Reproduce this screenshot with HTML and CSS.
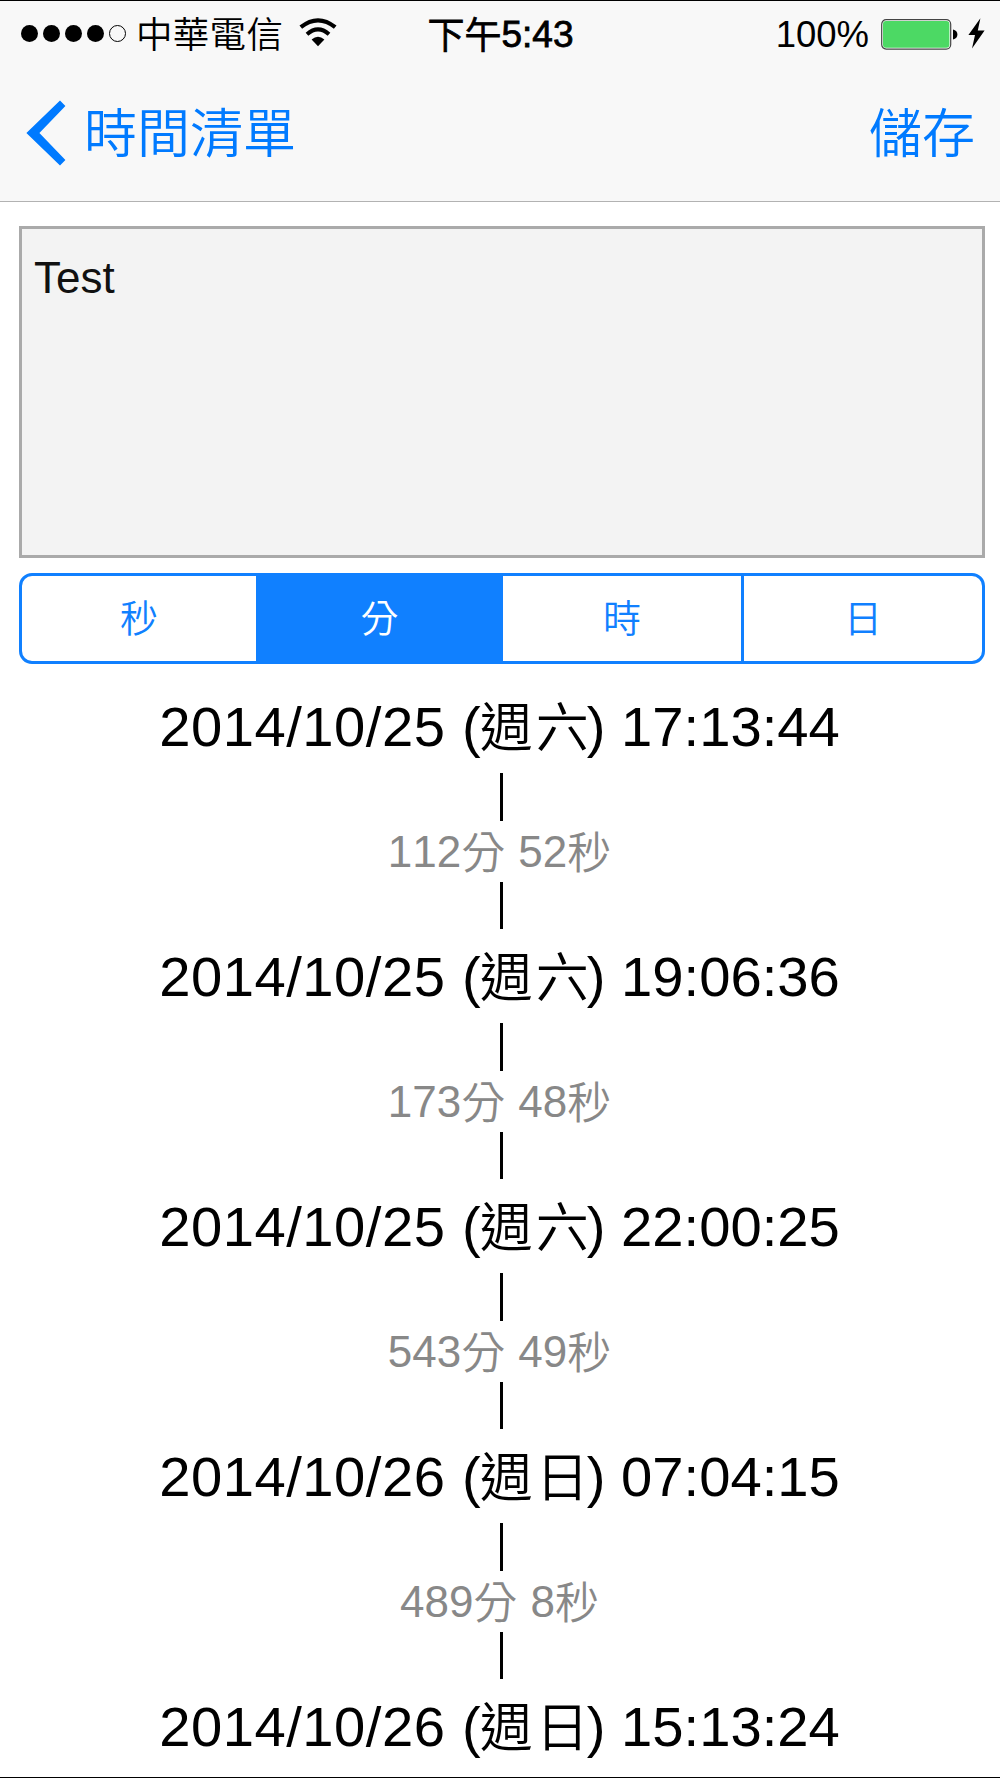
FILE: index.html
```html
<!DOCTYPE html>
<html lang="zh-Hant">
<head>
    <meta charset="UTF-8">
    <meta name="viewport" content="width=device-width, initial-scale=1.0">
    <title>時間清單</title>
    <link rel="stylesheet" href="styles.css">
</head>
<body>

<div class="screen">
    <header class="header">
        <div class="status-bar">
            <div class="status-left">
                <div class="signal">
                    <span class="dot"></span>
                    <span class="dot"></span>
                    <span class="dot"></span>
                    <span class="dot"></span>
                    <span class="dot empty"></span>
                </div>
                <span class="carrier">中華電信</span>
                <svg class="wifi" width="38" height="29" viewBox="0 0 38 29">
                    <path d="M1.8 9.2 Q19 -4.6 36.2 9.2" fill="none" stroke="#000" stroke-width="4.2"/>
                    <path d="M8 16.2 Q19 6.6 30 16.2" fill="none" stroke="#000" stroke-width="4"/>
                    <path d="M12.6 21.4 Q19 16.2 25.4 21.4 L19 28.2 Z" fill="#000"/>
                </svg>
            </div>
            <div class="status-time"><span class="zh">下午</span>5:43</div>
            <div class="status-right">
                <span class="percent">100%</span>
                <svg class="battery" width="77" height="31" viewBox="0 0 77 31">
                    <rect x="0.7" y="0.7" width="69" height="29.4" rx="4.5" fill="#fff" stroke="#444" stroke-width="1.2"/>
                    <rect x="2" y="2" width="66.4" height="26.8" rx="3" fill="#4cd964"/>
                    <path d="M72 10.5 Q76.4 11.5 76.4 15.5 Q76.4 19.5 72 20.5 Z" fill="#000"/>
                </svg>
                <svg class="bolt" width="17" height="31" viewBox="0 0 17 31">
                    <path d="M12.4 0.3 L0.4 17 H7 L4 30.6 L16.6 12.6 H9.8 Z" fill="#000"/>
                </svg>
            </div>
        </div>
        <nav class="nav-bar">
            <a class="back">
                <svg width="40" height="66" viewBox="0 0 40 66">
                    <path d="M34 0.6 L39.4 6 L13.4 33 L39.4 60 L34 65.4 L0.4 33 Z" fill="#007aff"/>
                </svg>
                <span class="nav-text">時間清單</span>
            </a>
            <a class="save nav-text">儲存</a>
        </nav>
    </header>

    <main class="content">
        <div class="note">Test</div>

        <div class="segments">
            <div class="segment">秒</div>
            <div class="segment active">分</div>
            <div class="segment">時</div>
            <div class="segment">日</div>
        </div>

        <div class="timeline">
            <div class="date"><span class="day">2014/10/25</span> (<span class="zh">週六</span>) 17:13:44</div>
            <div class="gap"><span>112<span class="zh">分</span> 52<span class="zh">秒</span></span></div>
            <div class="date"><span class="day">2014/10/25</span> (<span class="zh">週六</span>) 19:06:36</div>
            <div class="gap"><span>173<span class="zh">分</span> 48<span class="zh">秒</span></span></div>
            <div class="date"><span class="day">2014/10/25</span> (<span class="zh">週六</span>) 22:00:25</div>
            <div class="gap"><span>543<span class="zh">分</span> 49<span class="zh">秒</span></span></div>
            <div class="date"><span class="day">2014/10/26</span> (<span class="zh">週日</span>) 07:04:15</div>
            <div class="gap"><span>489<span class="zh">分</span> 8<span class="zh">秒</span></span></div>
            <div class="date"><span class="day">2014/10/26</span> (<span class="zh">週日</span>) 15:13:24</div>
        </div>
    </main>
</div>

</body>
</html>
```
FILE: styles.css
```css
* {
    box-sizing: border-box;
}

body {
    margin: 0;
    font-family: "Liberation Sans", "Noto Sans CJK TC", sans-serif;
    font-weight: 350;
    background-color: #fff;
    color: #000;
}

.screen {
    width: 1000px;
    height: 1778px;
    overflow: hidden;
    border-top: 1px solid #000;
    border-bottom: 1px solid #000;
}

.header {
    height: 201px;
    background-color: #f8f8f8;
    border-bottom: 1px solid #b2b2b2;
}

.zh {
    line-height: 1;
    vertical-align: -2px;
}

.status-bar {
    display: grid;
    grid-template-columns: 1fr auto 1fr;
    align-items: center;
    height: 66px;
    padding: 0 15px 0 21px;
    font-size: 36.5px;
    line-height: 60px;
}

.status-left,
.status-right {
    display: flex;
    align-items: center;
}

.status-right {
    justify-content: flex-end;
}

.signal {
    display: flex;
    gap: 5px;
    margin-bottom: 2px;
}

.dot {
    width: 17px;
    height: 17px;
    border-radius: 50%;
    background-color: #000;
}

.dot.empty {
    background: none;
    border: 1px solid #000;
}

.carrier {
    margin-left: 10px;
    padding-top: 3px;
    letter-spacing: 0.3px;
}

.wifi {
    margin-left: 16px;
    margin-bottom: 3px;
}

.status-time {
    padding: 2px 5px 0 0;
    font-size: 37px;
    -webkit-text-stroke: 0.8px #000;
}

.percent {
    padding-top: 2px;
}

.battery {
    margin-left: 12px;
}

.bolt {
    margin-left: 10px;
    margin-bottom: 2px;
}

.nav-bar {
    display: flex;
    justify-content: space-between;
    align-items: center;
    height: 134px;
    padding: 0 25px 2px 26px;
    font-size: 53px;
    line-height: 132px;
    color: #007aff;
}

.nav-text {
    padding-top: 3px;
}

.back {
    display: flex;
    align-items: center;
    gap: 18px;
}

.content {
    padding: 24px 15px 0 19px;
}

.note {
    height: 332px;
    padding: 23px 12px;
    border: 3px solid #aaa;
    background-color: #f3f3f3;
    color: #111;
    font-size: 44px;
    line-height: 52px;
}

.segments {
    display: grid;
    grid-template-columns: 234px 247px 238px 1fr;
    height: 91px;
    margin-top: 15px;
    border: 3px solid #1080ff;
    border-radius: 13px;
    color: #1080ff;
    font-size: 38px;
    line-height: 87px;
    text-align: center;
}

.segment {
    height: 85px;
}

.segment.active {
    background-color: #1080ff;
    color: #fff;
}

.segment:last-child {
    border-left: 3px solid #1080ff;
}

.timeline {
    padding: 15px 1px 0 0;
    text-align: center;
}

.date {
    height: 94px;
    padding-right: 4px;
    font-size: 56.2px;
    line-height: 96px;
    white-space: nowrap;
}

.date .day {
    margin-right: 1px;
    letter-spacing: 0.5px;
}

.date .zh {
    margin: 0 -5px 0 -1px;
    font-size: 53px;
    letter-spacing: 3px;
    vertical-align: -1px;
}

.gap {
    height: 156px;
    color: #888;
    font-size: 44px;
    line-height: 61px;
    font-kerning: none;
    word-spacing: 1px;
}

.gap > span {
    margin-right: 4px;
}

/* connector lines above and below each interval */
.gap::before,
.gap::after {
    content: "";
    display: block;
    width: 3px;
    height: 48px;
    margin: 0 auto;
    background-color: #000;
}

.gap::after {
    height: 47px;
}
```
